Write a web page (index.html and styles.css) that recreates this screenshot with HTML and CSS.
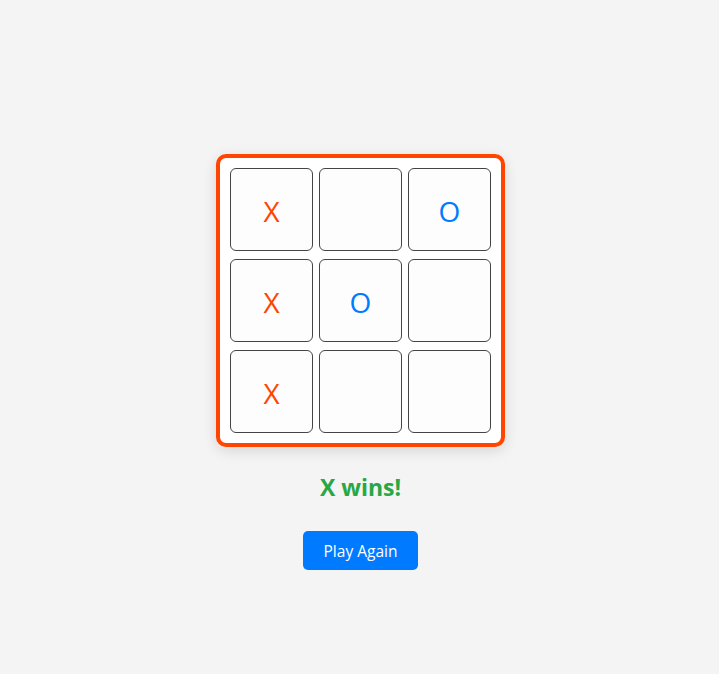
FILE: index.html
```html
<!DOCTYPE html>
<html>
<head>
<meta charset="utf-8">
<link rel="stylesheet" href="styles.css">
</head>
<body>
<div class="game">
  <div class="board">
    <div class="cell x">X</div>
    <div class="cell"></div>
    <div class="cell o">O</div>
    <div class="cell x">X</div>
    <div class="cell o">O</div>
    <div class="cell"></div>
    <div class="cell x">X</div>
    <div class="cell"></div>
    <div class="cell"></div>
  </div>
  <div class="status">X wins!</div>
  <button class="reset">Play Again</button>
</div>
</body>
</html>
```
FILE: styles.css
```css
html, body {
  margin: 0;
  padding: 0;
}
body {
  background: #f4f4f4;
  font-family: "Open Sans", "Noto Sans", sans-serif;
  height: 674px;
}
.game {
  display: flex;
  flex-direction: column;
  align-items: center;
  padding-top: 154px;
  padding-left: 2px;
}
.board {
  display: grid;
  grid-template-columns: repeat(3, 83px);
  grid-template-rows: repeat(3, 83px);
  column-gap: 6px;
  row-gap: 8px;
  padding: 10px;
  border: 4px solid #ff4500;
  border-radius: 10px;
  background: #ffffff;
  box-shadow: 0 4px 14px rgba(0, 0, 0, 0.12);
}
.cell {
  box-sizing: border-box;
  border: 1px solid #444;
  border-radius: 6px;
  background: #fdfdfd;
  display: flex;
  align-items: center;
  justify-content: center;
  font-size: 28px;
  padding-top: 2px;
}
.cell.x { color: #ff4500; }
.cell.o { color: #007bff; }
.status {
  margin-top: 24px;
  font-size: 23px;
  font-weight: 700;
  color: #28a745;
  line-height: 32px;
}
.reset {
  margin-top: 28px;
  width: 115px;
  height: 39px;
  border: none;
  border-radius: 5px;
  background: #007bff;
  color: #fff;
  font-family: "Open Sans", "Noto Sans", sans-serif;
  font-size: 15.5px;
  cursor: pointer;
}
```
